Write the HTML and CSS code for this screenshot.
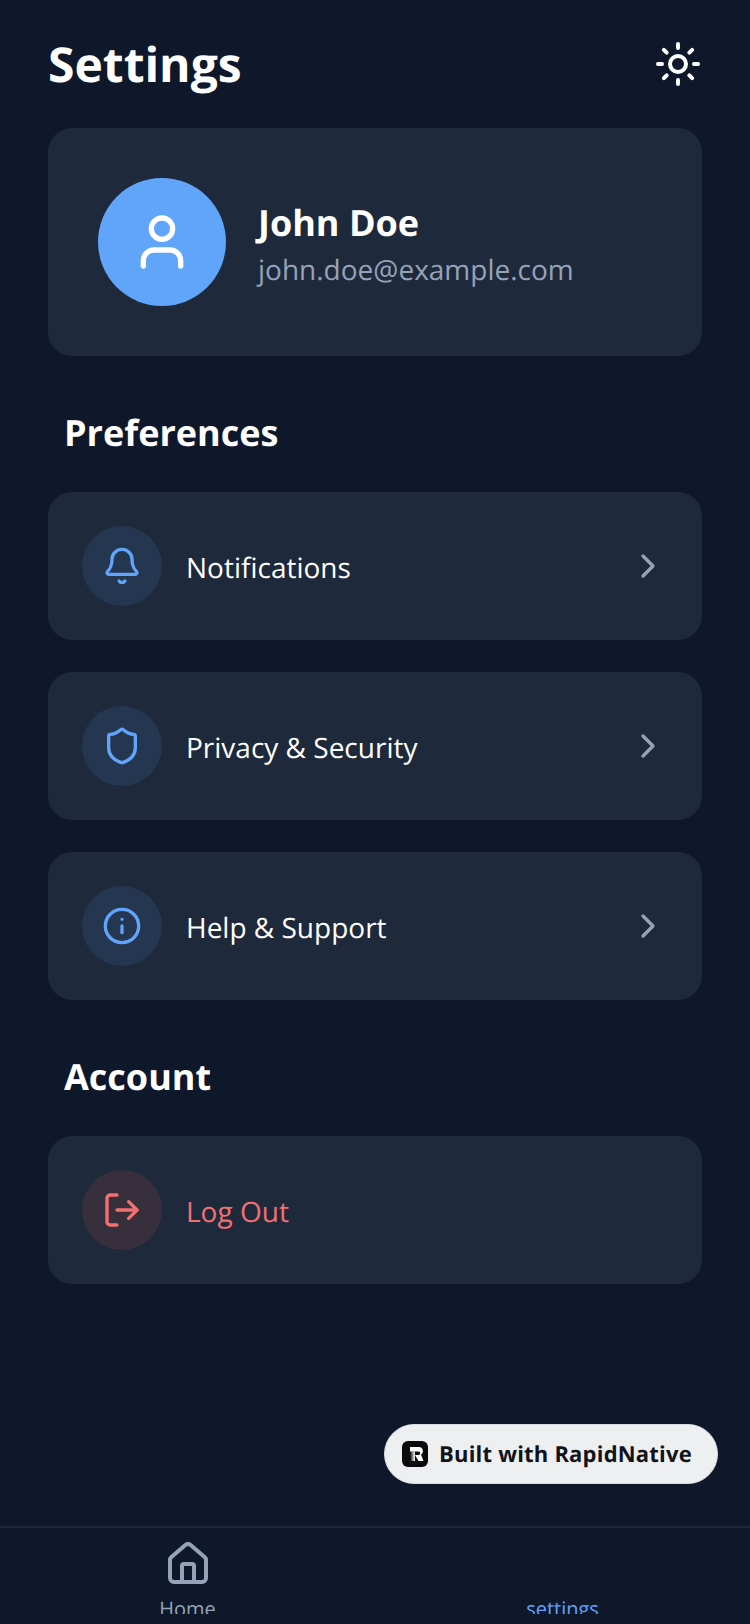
FILE: index.html
```html
<!DOCTYPE html>
<html lang="en">
<head>
<meta charset="utf-8">
<title>Settings</title>
<link rel="stylesheet" href="styles.css">
</head>
<body>
<div class="screen">
  <main class="content">
    <header class="header">
      <h1 class="title">Settings</h1>
      <svg class="icon icon-48 white" viewBox="0 0 24 24"><circle cx="12" cy="12" r="4"/><path d="M12 2v2M12 20v2M4.93 4.93l1.41 1.41M17.66 17.66l1.41 1.41M2 12h2M20 12h2M6.34 17.66l-1.41 1.41M19.07 4.93l-1.41 1.41"/></svg>
    </header>
    <section class="profile">
      <div class="avatar">
        <svg class="icon icon-64 white" viewBox="0 0 24 24"><path d="M19 21v-2a4 4 0 0 0-4-4H9a4 4 0 0 0-4 4v2"/><circle cx="12" cy="7" r="4"/></svg>
      </div>
      <div class="profile-text">
        <div class="name">John Doe</div>
        <div class="email">john.doe@example.com</div>
      </div>
    </section>
    <h2 class="section-title first">Preferences</h2>
    <div class="list">
      <div class="row">
        <span class="badge-icon"><svg class="icon icon-40 blue" viewBox="0 0 24 24"><path d="M10.268 21a2 2 0 0 0 3.464 0"/><path d="M3.262 15.326A1 1 0 0 0 4 17h16a1 1 0 0 0 .74-1.673C19.41 13.956 18 12.499 18 8A6 6 0 0 0 6 8c0 4.499-1.411 5.956-2.738 7.326"/></svg></span>
        <span class="row-label">Notifications</span>
        <svg class="icon icon-40 slate" viewBox="0 0 24 24"><path d="m9 18 6-6-6-6"/></svg>
      </div>
      <div class="row">
        <span class="badge-icon"><svg class="icon icon-40 blue" viewBox="0 0 24 24"><path d="M20 13c0 5-3.5 7.5-7.66 8.95a1 1 0 0 1-.67-.01C7.5 20.5 4 18 4 13V6a1 1 0 0 1 1-1c2 0 4.5-1.2 6.24-2.72a1.17 1.17 0 0 1 1.52 0C14.51 3.81 17 5 19 5a1 1 0 0 1 1 1z"/></svg></span>
        <span class="row-label">Privacy &amp; Security</span>
        <svg class="icon icon-40 slate" viewBox="0 0 24 24"><path d="m9 18 6-6-6-6"/></svg>
      </div>
      <div class="row">
        <span class="badge-icon"><svg class="icon icon-40 blue" viewBox="0 0 24 24"><circle cx="12" cy="12" r="10"/><path d="M12 16v-4M12 8h.01"/></svg></span>
        <span class="row-label">Help &amp; Support</span>
        <svg class="icon icon-40 slate" viewBox="0 0 24 24"><path d="m9 18 6-6-6-6"/></svg>
      </div>
    </div>
    <h2 class="section-title second">Account</h2>
    <div class="list">
      <div class="row">
        <span class="badge-icon danger"><svg class="icon icon-40 red" viewBox="0 0 24 24"><path d="M9 21H5a2 2 0 0 1-2-2V5a2 2 0 0 1 2-2h4"/><path d="m16 17 5-5-5-5"/><path d="M21 12H9"/></svg></span>
        <span class="row-label danger-text">Log Out</span>
      </div>
    </div>
  </main>
  <div class="built">
    <svg class="logo" viewBox="0 0 26 26">
      <defs><linearGradient id="stem" x1="0" y1="0" x2="1" y2="0"><stop offset="0" stop-color="#0b0b0d"/><stop offset="1" stop-color="#fff"/></linearGradient></defs>
      <rect width="26" height="26" rx="6" fill="#0b0b0d"/>
      <path d="M8 10.5h5V20H9z" fill="url(#stem)"/>
      <path d="M8 6h9a4 4 0 0 1 2 7.4L21.5 20h-5L13 14h3.5a1.7 1.7 0 0 0 0-3.5H8z" fill="#fff"/>
    </svg>
    <span>Built with RapidNative</span>
  </div>
  <nav class="tabbar">
    <div class="tab">
      <svg class="icon icon-48 slate" viewBox="0 0 24 24"><path d="M15 21v-8a1 1 0 0 0-1-1h-4a1 1 0 0 0-1 1v8"/><path d="M3 10a2 2 0 0 1 .709-1.528l7-5.999a2 2 0 0 1 2.582 0l7 5.999A2 2 0 0 1 21 10v9a2 2 0 0 1-2 2H5a2 2 0 0 1-2-2z"/></svg>
      <span class="tab-label">Home</span>
    </div>
    <div class="tab">
      <span class="tab-spacer"></span>
      <span class="tab-label active">settings</span>
    </div>
  </nav>
</div>
</body>
</html>
```
FILE: styles.css
```css
* { box-sizing: border-box; }
html, body { margin: 0; padding: 0; }
body {
  width: 750px;
  height: 1624px;
  overflow: hidden;
  background: #0f172a;
  font-family: "Open Sans", "Noto Sans", sans-serif;
  color: #fff;
  text-rendering: geometricPrecision;
}
.screen {
  position: relative;
  display: flex;
  flex-direction: column;
  height: 1624px;
}
.content {
  flex: 1;
  padding: 0 48px;
}
.header {
  display: flex;
  align-items: center;
  justify-content: space-between;
  height: 128px;
}
.title {
  margin: 2px 0 0;
  font-size: 48px;
  line-height: 64px;
  font-weight: 700;
}
.icon {
  display: block;
  flex: none;
  fill: none;
  stroke-width: 2;
  stroke-linecap: round;
  stroke-linejoin: round;
}
.icon-40 { width: 40px; height: 40px; }
.icon-48 { width: 48px; height: 48px; }
.icon-64 { width: 64px; height: 64px; }
.white { stroke: #fff; }
.blue { stroke: #60a5fa; }
.slate { stroke: #94a3b8; }
.red { stroke: #f37070; }
.profile {
  display: flex;
  align-items: center;
  gap: 32px;
  height: 228px;
  padding: 0 50px;
  background: #1e293b;
  border-radius: 24px;
}
.avatar {
  display: flex;
  align-items: center;
  justify-content: center;
  width: 128px;
  height: 128px;
  border-radius: 50%;
  background: #60a5fa;
}
.profile-text {
  display: flex;
  flex-direction: column;
  gap: 3px;
  padding-top: 5px;
}
.name {
  font-size: 36px;
  line-height: 48px;
  font-weight: 700;
}
.email {
  font-size: 28px;
  line-height: 40px;
  color: #94a3b8;
}
.section-title {
  margin: 0 0 0 16px;
  font-size: 36px;
  line-height: 48px;
  font-weight: 700;
}
.section-title.first { margin-top: 53px; margin-bottom: 35px; }
.section-title.second { margin-top: 53px; margin-bottom: 35px; }
.list {
  display: flex;
  flex-direction: column;
  gap: 32px;
}
.row {
  display: flex;
  align-items: center;
  height: 148px;
  padding: 0 34px;
  background: #1e293b;
  border-radius: 24px;
}
.badge-icon {
  display: flex;
  align-items: center;
  justify-content: center;
  flex: none;
  width: 80px;
  height: 80px;
  border-radius: 50%;
  background: #243650;
}
.badge-icon.danger { background: #37303c; }
.row-label {
  flex: 1;
  margin-left: 24px;
  padding-top: 4px;
  font-size: 28px;
  line-height: 40px;
  color: #fff;
}
.danger-text { color: #f37070; }
.built {
  position: absolute;
  left: 384px;
  top: 1424px;
  display: flex;
  align-items: center;
  gap: 11px;
  width: 334px;
  height: 60px;
  padding-left: 17px;
  background: #eeeff1;
  border: 1px solid #d9dce1;
  border-radius: 30px;
  color: #111318;
  font-size: 22px;
  letter-spacing: 0.2px;
  font-weight: 700;
}
.logo { display: block; flex: none; width: 26px; height: 26px; }
.tabbar {
  display: flex;
  flex: none;
  height: 98px;
  padding-bottom: 10px;
  border-top: 2px solid #1e293b;
}
.tab {
  flex: 1;
  display: flex;
  flex-direction: column;
  align-items: center;
  padding-top: 12px;
  overflow: hidden;
}
.tab-spacer { display: block; height: 48px; flex: none; }
.tab-label {
  margin-top: 7px;
  font-size: 20px;
  line-height: 28px;
  color: #94a3b8;
}
.tab-label.active { color: #60a5fa; }
```
